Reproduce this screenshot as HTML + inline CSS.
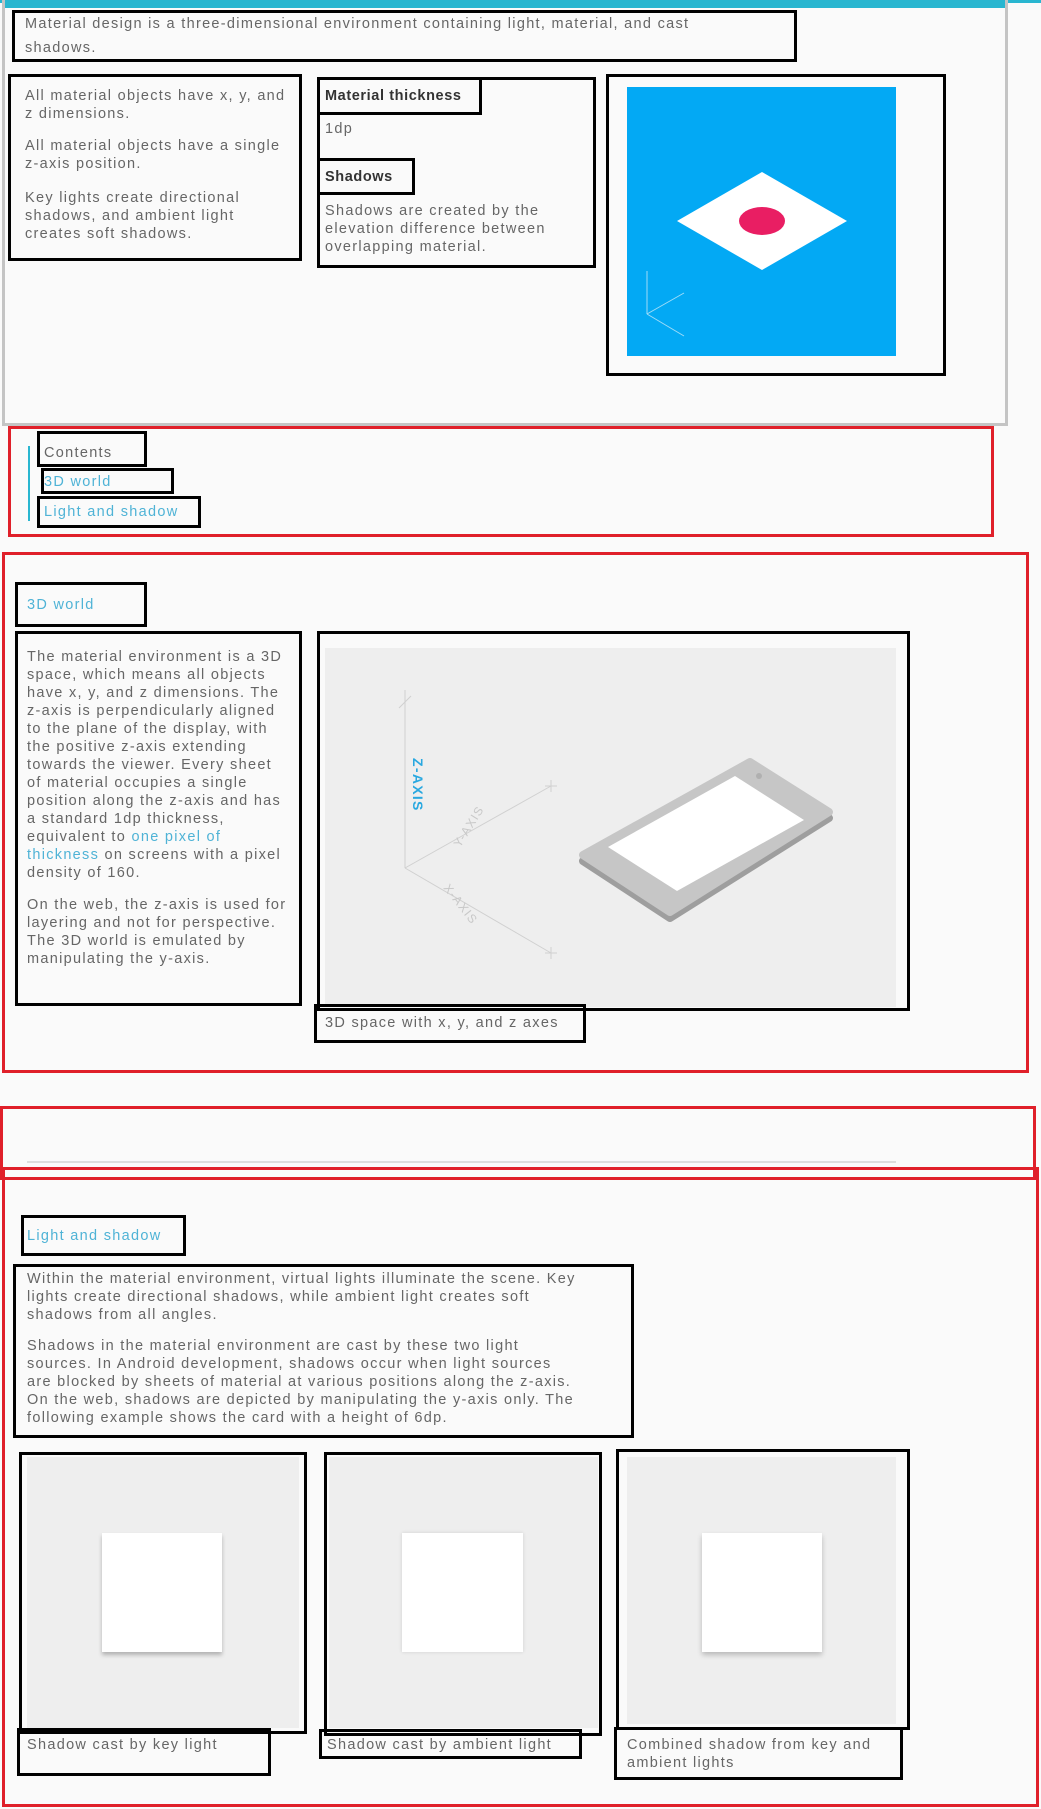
<!DOCTYPE html>
<html><head><meta charset="utf-8"><style>
*{margin:0;padding:0;box-sizing:border-box}
body{width:1041px;height:1809px;background:#fafafa;position:relative;overflow:hidden;font-family:"Liberation Sans",sans-serif;color:#666;font-size:14.5px;letter-spacing:1.3px}
.a{position:absolute}
.bx{position:absolute;border:3px solid #000}
.rb{position:absolute;border:3px solid #e0202a}
.t{position:absolute;white-space:nowrap;line-height:18px}
.h{color:#333;font-weight:bold;letter-spacing:0.6px}
.tl{color:#4fb3d6}
</style></head><body>
<div class="a" style="left:0;top:0;width:1041px;height:3px;background:#29b6d0"></div>
<div class="a" style="left:2px;top:0;width:1006px;height:426px;border:3px solid #c4c4c4;border-top:none"></div>
<div class="a" style="left:5px;top:3px;width:1000px;height:5px;background:#29b6d0"></div>

<div class="bx" style="left:12px;top:10px;width:785px;height:52px"></div>
<div class="t" style="left:25px;top:12px;line-height:24px">Material design is a three-dimensional environment containing light, material, and cast<br>shadows.</div>

<div class="bx" style="left:8px;top:74px;width:294px;height:187px"></div>
<div class="t" style="left:25px;top:87px">All material objects have x, y, and<br>z dimensions.</div>
<div class="t" style="left:25px;top:137px">All material objects have a single<br>z-axis position.</div>
<div class="t" style="left:25px;top:189px">Key lights create directional<br>shadows, and ambient light<br>creates soft shadows.</div>

<div class="bx" style="left:317px;top:77px;width:279px;height:191px"></div>
<div class="bx" style="left:317px;top:77px;width:165px;height:38px"></div>
<div class="t h" style="left:325px;top:87px">Material thickness</div>
<div class="t" style="left:325px;top:120px">1dp</div>
<div class="bx" style="left:317px;top:158px;width:98px;height:37px"></div>
<div class="t h" style="left:325px;top:168px">Shadows</div>
<div class="t" style="left:325px;top:202px">Shadows are created by the<br>elevation difference between<br>overlapping material.</div>

<div class="bx" style="left:606px;top:74px;width:340px;height:302px"></div>
<svg class="a" style="left:627px;top:87px" width="269" height="269">
<rect width="269" height="269" fill="#03a9f4"/>
<polygon points="135,85 220,134 135,183 50,134" fill="#fff"/>
<ellipse cx="135" cy="134" rx="23" ry="14" fill="#e91e63"/>
<g stroke="#9fdcf8" stroke-width="1" fill="none"><line x1="20" y1="184" x2="20" y2="227"/><line x1="20" y1="227" x2="57" y2="206"/><line x1="20" y1="227" x2="57" y2="249"/></g>
</svg>

<div class="rb" style="left:8px;top:426px;width:986px;height:111px"></div>
<div class="a" style="left:28px;top:446px;width:2px;height:75px;background:#29b6d0"></div>
<div class="bx" style="left:37px;top:431px;width:110px;height:36px"></div>
<div class="t" style="left:44px;top:444px">Contents</div>
<div class="bx" style="left:41px;top:468px;width:133px;height:26px"></div>
<div class="t tl" style="left:44px;top:473px">3D world</div>
<div class="bx" style="left:37px;top:496px;width:164px;height:32px"></div>
<div class="t tl" style="left:44px;top:503px">Light and shadow</div>

<div class="rb" style="left:2px;top:552px;width:1027px;height:521px"></div>
<div class="bx" style="left:15px;top:582px;width:132px;height:45px"></div>
<div class="t tl" style="left:27px;top:596px">3D world</div>
<div class="bx" style="left:15px;top:631px;width:287px;height:375px"></div>
<div class="t" style="left:27px;top:648px">The material environment is a 3D<br>space, which means all objects<br>have x, y, and z dimensions. The<br>z-axis is perpendicularly aligned<br>to the plane of the display, with<br>the positive z-axis extending<br>towards the viewer. Every sheet<br>of material occupies a single<br>position along the z-axis and has<br>a standard 1dp thickness,<br>equivalent to <span class="tl">one pixel of</span><br><span class="tl">thickness</span> on screens with a pixel<br>density of 160.</div>
<div class="t" style="left:27px;top:896px">On the web, the z-axis is used for<br>layering and not for perspective.<br>The 3D world is emulated by<br>manipulating the y-axis.</div>

<div class="bx" style="left:317px;top:631px;width:593px;height:380px"></div>
<svg class="a" style="left:325px;top:648px" width="571" height="359">
<rect width="571" height="359" fill="#eeeeee"/>
<g stroke="#d0d0d0" stroke-width="1" fill="none">
<line x1="80" y1="45" x2="80" y2="220"/><line x1="80" y1="220" x2="226" y2="138"/><line x1="80" y1="220" x2="226" y2="305"/>
<path d="M74 60 L86 48 M80 42 v14"/><path d="M220 138 h12 M226 132 v12"/><path d="M220 305 h12 M226 299 v12"/>
</g>
<text transform="translate(88,110) rotate(90)" fill="#29a8e0" font-size="14" font-weight="bold" font-family="Liberation Sans">Z-AXIS</text>
<text transform="translate(135,200) rotate(-58)" fill="#c8c8c8" font-size="12" font-family="Liberation Sans">Y-AXIS</text>
<text transform="translate(118,240) rotate(52)" fill="#c8c8c8" font-size="12" font-family="Liberation Sans">X-AXIS</text>
<polygon points="258,213 425,120 504,170 345,270" fill="#9e9e9e" stroke="#9e9e9e" stroke-width="8" stroke-linejoin="round"/>
<polygon points="258,207 425,114 504,164 345,264" fill="#c6c6c6" stroke="#c6c6c6" stroke-width="8" stroke-linejoin="round"/>
<polygon points="283,199 410,128 479,172 352,243" fill="#fff"/>
<circle cx="434" cy="128" r="3" fill="#b0b0b0"/>
</svg>
<div class="bx" style="left:314px;top:1004px;width:272px;height:39px"></div>
<div class="t" style="left:325px;top:1014px">3D space with x, y, and z axes</div>

<div class="rb" style="left:0;top:1106px;width:1036px;height:74px"></div>
<div class="a" style="left:27px;top:1161px;width:869px;height:2px;background:#ddd"></div>

<div class="rb" style="left:2px;top:1167px;width:1037px;height:640px"></div>
<div class="bx" style="left:21px;top:1215px;width:165px;height:41px"></div>
<div class="t tl" style="left:27px;top:1227px">Light and shadow</div>
<div class="bx" style="left:13px;top:1264px;width:621px;height:174px"></div>
<div class="t" style="left:27px;top:1270px">Within the material environment, virtual lights illuminate the scene. Key<br>lights create directional shadows, while ambient light creates soft<br>shadows from all angles.</div>
<div class="t" style="left:27px;top:1337px">Shadows in the material environment are cast by these two light<br>sources. In Android development, shadows occur when light sources<br>are blocked by sheets of material at various positions along the z-axis.<br>On the web, shadows are depicted by manipulating the y-axis only. The<br>following example shows the card with a height of 6dp.</div>

<div class="a" style="left:27px;top:1457px;width:272px;height:271px;background:#eee"></div>
<div class="a" style="left:102px;top:1533px;width:120px;height:119px;background:#fff;box-shadow:0 3px 4px rgba(0,0,0,.25)"></div>
<div class="bx" style="left:19px;top:1452px;width:288px;height:282px"></div>
<div class="a" style="left:329px;top:1457px;width:269px;height:271px;background:#eee"></div>
<div class="a" style="left:402px;top:1533px;width:121px;height:119px;background:#fff;box-shadow:0 0 4px rgba(0,0,0,.12)"></div>
<div class="bx" style="left:324px;top:1452px;width:278px;height:284px"></div>
<div class="a" style="left:627px;top:1457px;width:269px;height:267px;background:#eee"></div>
<div class="a" style="left:702px;top:1533px;width:120px;height:119px;background:#fff;box-shadow:0 3px 5px rgba(0,0,0,.22)"></div>
<div class="bx" style="left:616px;top:1449px;width:294px;height:281px"></div>

<div class="bx" style="left:17px;top:1728px;width:254px;height:48px"></div>
<div class="t" style="left:27px;top:1736px">Shadow cast by key light</div>
<div class="bx" style="left:319px;top:1729px;width:263px;height:30px"></div>
<div class="t" style="left:327px;top:1736px">Shadow cast by ambient light</div>
<div class="bx" style="left:614px;top:1727px;width:289px;height:53px"></div>
<div class="t" style="left:627px;top:1736px">Combined shadow from key and<br>ambient lights</div>
</body></html>
